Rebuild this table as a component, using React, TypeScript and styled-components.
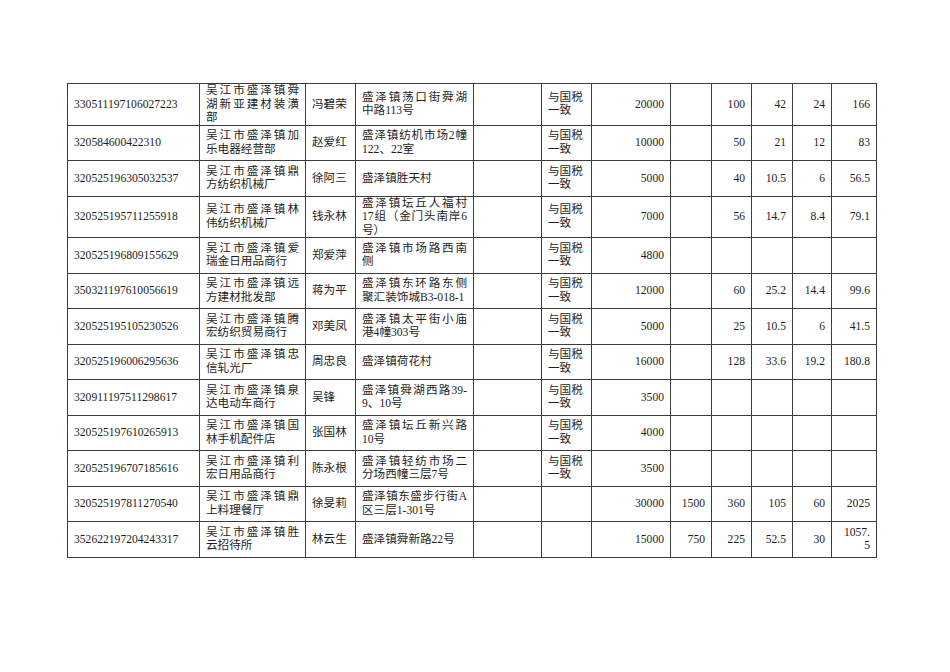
import React from "react";
import styled, { createGlobalStyle } from "styled-components";

const GlobalStyle = createGlobalStyle`
  html, body { margin: 0; padding: 0; background: #ffffff; }
  body { font-family: "Liberation Serif", "Noto Sans CJK SC", serif; }
`;

const Page = styled.div`
  width: 950px;
  height: 672px;
  box-sizing: border-box;
  padding: 83px 0 0 67px;
  background: #ffffff;
`;

const Table = styled.table`
  border-collapse: collapse;
  table-layout: fixed;
  width: 809px;
  color: #1e1e1e;
  font-family: "Liberation Serif", "Noto Sans CJK SC", serif;
  font-size: 11.6px;
  line-height: 13.5px;
`;

const Row = styled.tr`
  height: 35.5px;
`;

const Cell = styled.td<{ $align?: "left" | "right" }>`
  border: 1px solid #3c3c3c;
  padding: 0 6px;
  vertical-align: middle;
  text-align: ${(p) => p.$align ?? "left"};
  overflow: hidden;
`;

const Line = styled.div<{ $spread?: boolean }>`
  white-space: nowrap;
  text-align: ${(p) => (p.$spread ? "justify" : "inherit")};
  text-align-last: ${(p) => (p.$spread ? "justify" : "auto")};
`;

type Lines = string | string[];

const Multi: React.FC<{ value: Lines; spread?: boolean }> = ({ value, spread = true }) => {
  const lines = Array.isArray(value) ? value : [value];
  return (
    <>
      {lines.map((l, i) => (
        <Line key={i} $spread={spread && i < lines.length - 1}>
          {l}
        </Line>
      ))}
    </>
  );
};

type Rec = {
  id: string;
  company: string[];
  person: string;
  addr: string[];
  tax: boolean;
  amount: string;
  a: string;
  b: string;
  c: string;
  d: string;
  e: Lines;
};

const TAX = ["与国税", "一致"];

const rows: Rec[] = [
  { id: "330511197106027223", company: ["吴江市盛泽镇舜", "湖新亚建材装潢", "部"], person: "冯碧荣", addr: ["盛泽镇荡口街舜湖", "中路113号"], tax: true, amount: "20000", a: "", b: "100", c: "42", d: "24", e: "166" },
  { id: "320584600422310", company: ["吴江市盛泽镇加", "乐电器经营部"], person: "赵爱红", addr: ["盛泽镇纺机市场2幢", "122、22室"], tax: true, amount: "10000", a: "", b: "50", c: "21", d: "12", e: "83" },
  { id: "320525196305032537", company: ["吴江市盛泽镇鼎", "方纺织机械厂"], person: "徐阿三", addr: ["盛泽镇胜天村"], tax: true, amount: "5000", a: "", b: "40", c: "10.5", d: "6", e: "56.5" },
  { id: "320525195711255918", company: ["吴江市盛泽镇林", "伟纺织机械厂"], person: "钱永林", addr: ["盛泽镇坛丘人福村", "17组（金门头南岸6", "号）"], tax: true, amount: "7000", a: "", b: "56", c: "14.7", d: "8.4", e: "79.1" },
  { id: "320525196809155629", company: ["吴江市盛泽镇爱", "瑞金日用品商行"], person: "郑爱萍", addr: ["盛泽镇市场路西南", "侧"], tax: true, amount: "4800", a: "", b: "", c: "", d: "", e: "" },
  { id: "350321197610056619", company: ["吴江市盛泽镇远", "方建材批发部"], person: "蒋为平", addr: ["盛泽镇东环路东侧", "聚汇装饰城B3-018-1"], tax: true, amount: "12000", a: "", b: "60", c: "25.2", d: "14.4", e: "99.6" },
  { id: "320525195105230526", company: ["吴江市盛泽镇腾", "宏纺织贸易商行"], person: "邓美凤", addr: ["盛泽镇太平街小庙", "港4幢303号"], tax: true, amount: "5000", a: "", b: "25", c: "10.5", d: "6", e: "41.5" },
  { id: "320525196006295636", company: ["吴江市盛泽镇忠", "信轧光厂"], person: "周忠良", addr: ["盛泽镇荷花村"], tax: true, amount: "16000", a: "", b: "128", c: "33.6", d: "19.2", e: "180.8" },
  { id: "320911197511298617", company: ["吴江市盛泽镇泉", "达电动车商行"], person: "吴锋", addr: ["盛泽镇舜湖西路39-", "9、10号"], tax: true, amount: "3500", a: "", b: "", c: "", d: "", e: "" },
  { id: "320525197610265913", company: ["吴江市盛泽镇国", "林手机配件店"], person: "张国林", addr: ["盛泽镇坛丘新兴路", "10号"], tax: true, amount: "4000", a: "", b: "", c: "", d: "", e: "" },
  { id: "320525196707185616", company: ["吴江市盛泽镇利", "宏日用品商行"], person: "陈永根", addr: ["盛泽镇轻纺市场二", "分场西幢三层7号"], tax: true, amount: "3500", a: "", b: "", c: "", d: "", e: "" },
  { id: "320525197811270540", company: ["吴江市盛泽镇鼎", "上料理餐厅"], person: "徐旻莉", addr: ["盛泽镇东盛步行街A", "区三层1-301号"], tax: false, amount: "30000", a: "1500", b: "360", c: "105", d: "60", e: "2025" },
  { id: "352622197204243317", company: ["吴江市盛泽镇胜", "云招待所"], person: "林云生", addr: ["盛泽镇舜新路22号"], tax: false, amount: "15000", a: "750", b: "225", c: "52.5", d: "30", e: ["1057.", "5"] },
];

const widths = [132, 106, 50, 118, 68, 50, 79, 41, 40, 41, 39, 45];

export default function App() {
  return (
    <>
      <GlobalStyle />
      <Page>
        <Table>
          <colgroup>
            {widths.map((w, i) => (
              <col key={i} style={{ width: w }} />
            ))}
          </colgroup>
          <tbody>
            {rows.map((r) => (
              <Row key={r.id}>
                <Cell>{r.id}</Cell>
                <Cell>
                  <Multi value={r.company} />
                </Cell>
                <Cell>{r.person}</Cell>
                <Cell>
                  <Multi value={r.addr} />
                </Cell>
                <Cell />
                <Cell>{r.tax ? <Multi value={TAX} spread={false} /> : null}</Cell>
                <Cell $align="right">{r.amount}</Cell>
                <Cell $align="right">{r.a}</Cell>
                <Cell $align="right">{r.b}</Cell>
                <Cell $align="right">{r.c}</Cell>
                <Cell $align="right">{r.d}</Cell>
                <Cell $align="right">
                  <Multi value={r.e} spread={false} />
                </Cell>
              </Row>
            ))}
          </tbody>
        </Table>
      </Page>
    </>
  );
}
